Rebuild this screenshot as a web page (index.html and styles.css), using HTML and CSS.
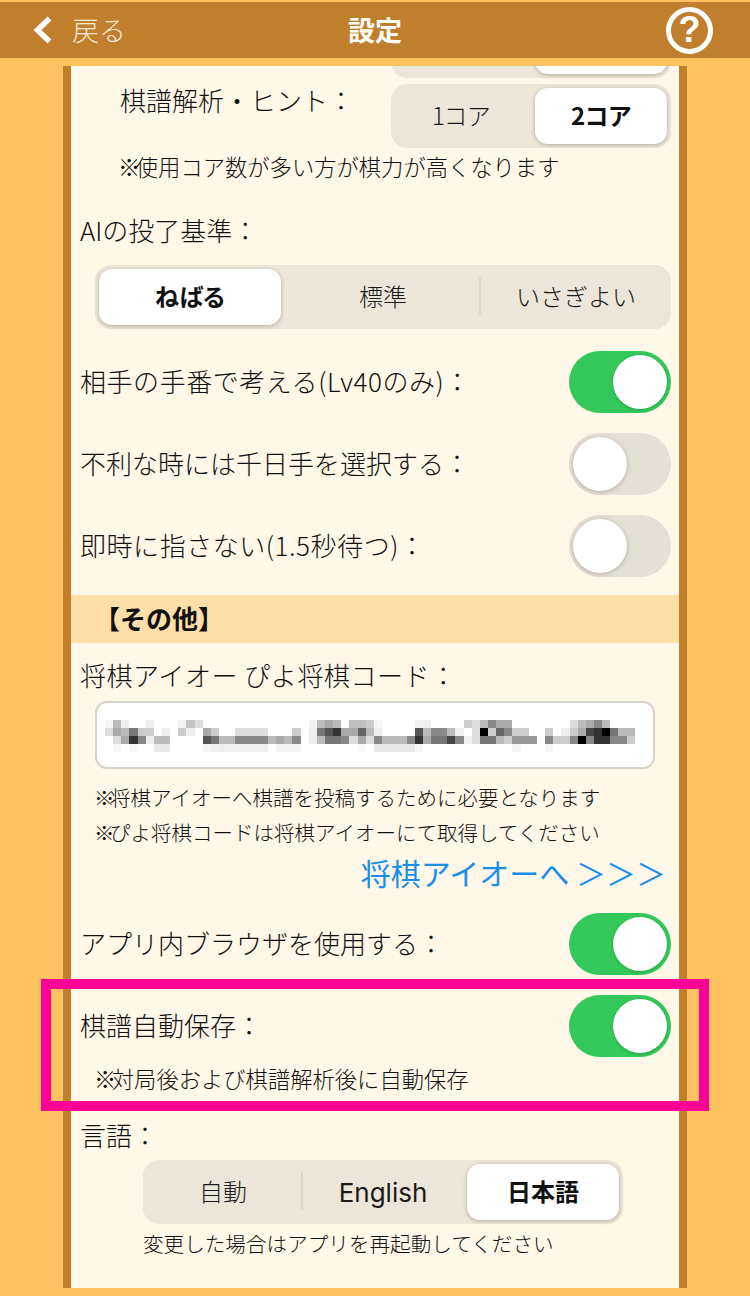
FILE: index.html
```html
<!DOCTYPE html>
<html lang="ja">
<head>
<meta charset="utf-8">
<title>設定</title>
<link rel="stylesheet" href="styles.css">
</head>
<body>
<header class="topbar">
  <div class="back">
    <svg class="chevron" viewBox="0 0 22 30" width="22" height="30"><path d="M18.5 3.5 L6.5 15 L18.5 26.5" fill="none" stroke="#fff" stroke-width="5.5"/></svg>
    <span>戻る</span>
  </div>
  <h1 class="title">設定</h1>
  <div class="help">?</div>
</header>
<main class="sheet">
  <div class="seg seg-core seg-clipped">
    <div class="opt">&nbsp;</div>
    <div class="opt on">&nbsp;</div>
  </div>
  <div class="core-row">
    <div class="label core-label">棋譜解析・ヒント：</div>
    <div class="seg seg-core">
      <div class="opt">1コア</div>
      <div class="opt on">2コア</div>
    </div>
  </div>
  <p class="note note-core"><span class="mark">※</span>使用コア数が多い方が棋力が高くなります</p>
  <div class="label label-ai">AIの投了基準：</div>
  <div class="seg seg-ai">
    <div class="opt on">ねばる</div>
    <div class="opt">標準</div>
    <div class="opt div full">いさぎよい</div>
  </div>
  <div class="row row-first"><div class="label wide">相手の手番で考える(Lv40のみ)：</div><div class="toggle is-on"><i></i></div></div>
  <div class="row"><div class="label">不利な時には千日手を選択する：</div><div class="toggle"><i></i></div></div>
  <div class="row"><div class="label wide">即時に指さない(1.5秒待つ)：</div><div class="toggle"><i></i></div></div>
  <div class="band">【その他】</div>
  <div class="label wide label-code">将棋アイオー ぴよ将棋コード：</div>
  <div class="code-input">
    <svg class="mosaic" viewBox="0 0 67 4" width="546" height="32" preserveAspectRatio="none" shape-rendering="crispEdges">
      <g>
        <rect x="0" y="0" width="1" height="1" fill="#f5f5f5"/><rect x="1" y="0" width="1" height="1" fill="#bbb"/><rect x="2" y="0" width="1" height="1" fill="#f0f0f0"/><rect x="5" y="0" width="1" height="1" fill="#eee"/><rect x="9" y="0" width="1" height="1" fill="#f2f2f2"/><rect x="10" y="0" width="1" height="1" fill="#c4c4c4"/><rect x="11" y="0" width="1" height="1" fill="#ddd"/><rect x="25" y="0" width="1" height="1" fill="#f2f2f2"/><rect x="26" y="0" width="1" height="1" fill="#bbb"/><rect x="27" y="0" width="1" height="1" fill="#aaa"/><rect x="28" y="0" width="1" height="1" fill="#bbb"/><rect x="30" y="0" width="2" height="1" fill="#c0c0c0"/><rect x="32" y="0" width="1" height="1" fill="#ccc"/><rect x="33" y="0" width="1" height="1" fill="#f5f5f5"/><rect x="38" y="0" width="1" height="1" fill="#f0f0f0"/><rect x="39" y="0" width="1" height="1" fill="#eee"/><rect x="44" y="0" width="1" height="1" fill="#ccc"/><rect x="45" y="0" width="1" height="1" fill="#ddd"/><rect x="46" y="0" width="1" height="1" fill="#bbb"/><rect x="47" y="0" width="1" height="1" fill="#888"/><rect x="48" y="0" width="2" height="1" fill="#aaa"/><rect x="57" y="0" width="1" height="1" fill="#ddd"/><rect x="58" y="0" width="1" height="1" fill="#bbb"/><rect x="59" y="0" width="1" height="1" fill="#aaa"/><rect x="60" y="0" width="1" height="1" fill="#888"/><rect x="61" y="0" width="1" height="1" fill="#bbb"/>
      </g>
      <g>
        <rect x="0" y="1" width="1" height="1" fill="#ddd"/><rect x="1" y="1" width="1" height="1" fill="#aaa"/><rect x="2" y="1" width="1" height="1" fill="#bbb"/><rect x="3" y="1" width="1" height="1" fill="#777"/><rect x="4" y="1" width="2" height="1" fill="#ccc"/><rect x="7" y="1" width="1" height="1" fill="#eee"/><rect x="9" y="1" width="1" height="1" fill="#ccc"/><rect x="10" y="1" width="1" height="1" fill="#eee"/><rect x="12" y="1" width="1" height="1" fill="#aaa"/><rect x="13" y="1" width="1" height="1" fill="#ccc"/><rect x="16" y="1" width="4" height="1" fill="#ddd"/><rect x="23" y="1" width="1" height="1" fill="#ccc"/><rect x="25" y="1" width="1" height="1" fill="#eee"/><rect x="26" y="1" width="1" height="1" fill="#777"/><rect x="27" y="1" width="1" height="1" fill="#555"/><rect x="28" y="1" width="1" height="1" fill="#333"/><rect x="29" y="1" width="2" height="1" fill="#aaa"/><rect x="31" y="1" width="1" height="1" fill="#666"/><rect x="32" y="1" width="1" height="1" fill="#bbb"/><rect x="33" y="1" width="1" height="1" fill="#eee"/><rect x="38" y="1" width="1" height="1" fill="#555"/><rect x="39" y="1" width="1" height="1" fill="#bbb"/><rect x="40" y="1" width="2" height="1" fill="#888"/><rect x="42" y="1" width="1" height="1" fill="#bbb"/><rect x="43" y="1" width="1" height="1" fill="#eee"/><rect x="45" y="1" width="1" height="1" fill="#ddd"/><rect x="46" y="1" width="1" height="1" fill="#000"/><rect x="47" y="1" width="1" height="1" fill="#ccc"/><rect x="48" y="1" width="1" height="1" fill="#666"/><rect x="49" y="1" width="1" height="1" fill="#888"/><rect x="50" y="1" width="2" height="1" fill="#ccc"/><rect x="54" y="1" width="1" height="1" fill="#ccc"/><rect x="56" y="1" width="1" height="1" fill="#eee"/><rect x="57" y="1" width="1" height="1" fill="#ccc"/><rect x="58" y="1" width="1" height="1" fill="#aaa"/><rect x="59" y="1" width="1" height="1" fill="#444"/><rect x="60" y="1" width="1" height="1" fill="#333"/><rect x="61" y="1" width="1" height="1" fill="#000"/><rect x="62" y="1" width="1" height="1" fill="#777"/><rect x="63" y="1" width="2" height="1" fill="#bbb"/>
      </g>
      <g>
        <rect x="1" y="2" width="1" height="1" fill="#ddd"/><rect x="2" y="2" width="1" height="1" fill="#aaa"/><rect x="3" y="2" width="1" height="1" fill="#333"/><rect x="4" y="2" width="1" height="1" fill="#888"/><rect x="5" y="2" width="1" height="1" fill="#eee"/><rect x="6" y="2" width="2" height="1" fill="#bbb"/><rect x="12" y="2" width="1" height="1" fill="#555"/><rect x="13" y="2" width="1" height="1" fill="#777"/><rect x="14" y="2" width="2" height="1" fill="#bbb"/><rect x="16" y="2" width="4" height="1" fill="#888"/><rect x="20" y="2" width="1" height="1" fill="#bbb"/><rect x="21" y="2" width="1" height="1" fill="#aaa"/><rect x="22" y="2" width="1" height="1" fill="#bbb"/><rect x="23" y="2" width="1" height="1" fill="#888"/><rect x="25" y="2" width="1" height="1" fill="#eee"/><rect x="26" y="2" width="1" height="1" fill="#bbb"/><rect x="27" y="2" width="2" height="1" fill="#777"/><rect x="29" y="2" width="1" height="1" fill="#888"/><rect x="30" y="2" width="1" height="1" fill="#ddd"/><rect x="31" y="2" width="1" height="1" fill="#aaa"/><rect x="32" y="2" width="1" height="1" fill="#ddd"/><rect x="33" y="2" width="1" height="1" fill="#888"/><rect x="34" y="2" width="3" height="1" fill="#bbb"/><rect x="37" y="2" width="1" height="1" fill="#888"/><rect x="38" y="2" width="1" height="1" fill="#333"/><rect x="39" y="2" width="1" height="1" fill="#aaa"/><rect x="40" y="2" width="2" height="1" fill="#777"/><rect x="42" y="2" width="1" height="1" fill="#444"/><rect x="43" y="2" width="1" height="1" fill="#888"/><rect x="44" y="2" width="1" height="1" fill="#eee"/><rect x="45" y="2" width="1" height="1" fill="#ddd"/><rect x="46" y="2" width="2" height="1" fill="#777"/><rect x="48" y="2" width="1" height="1" fill="#bbb"/><rect x="49" y="2" width="1" height="1" fill="#ccc"/><rect x="50" y="2" width="3" height="1" fill="#999"/><rect x="54" y="2" width="1" height="1" fill="#888"/><rect x="55" y="2" width="2" height="1" fill="#ccc"/><rect x="57" y="2" width="1" height="1" fill="#888"/><rect x="58" y="2" width="1" height="1" fill="#000"/><rect x="59" y="2" width="1" height="1" fill="#888"/><rect x="60" y="2" width="2" height="1" fill="#333"/><rect x="62" y="2" width="2" height="1" fill="#888"/><rect x="64" y="2" width="1" height="1" fill="#ccc"/>
      </g>
      <g>
        <rect x="1" y="3" width="1" height="1" fill="#f8f8f8"/><rect x="3" y="3" width="1" height="1" fill="#f8f8f8"/><rect x="6" y="3" width="2" height="1" fill="#e8e8e8"/><rect x="12" y="3" width="1" height="1" fill="#f5f5f5"/><rect x="13" y="3" width="1" height="1" fill="#f0f0f0"/><rect x="14" y="3" width="6" height="1" fill="#eee"/><rect x="21" y="3" width="3" height="1" fill="#f5f5f5"/><rect x="31" y="3" width="1" height="1" fill="#f8f8f8"/><rect x="33" y="3" width="5" height="1" fill="#e8e8e8"/><rect x="38" y="3" width="1" height="1" fill="#f5f5f5"/><rect x="50" y="3" width="1" height="1" fill="#f5f5f5"/><rect x="54" y="3" width="1" height="1" fill="#f5f5f5"/>
      </g>
    </svg>
  </div>
  <p class="note note-wide note-first"><span class="mark">※</span>将棋アイオーへ棋譜を投稿するために必要となります</p>
  <p class="note note-wide"><span class="mark">※</span>ぴよ将棋コードは将棋アイオーにて取得してください</p>
  <a class="link">将棋アイオーへ ＞＞＞</a>
  <div class="row row-browser"><div class="label">アプリ内ブラウザを使用する：</div><div class="toggle is-on"><i></i></div></div>
  <div class="row"><div class="label">棋譜自動保存：</div><div class="toggle is-on"><i></i></div></div>
  <p class="note note-auto"><span class="mark">※</span>対局後および棋譜解析後に自動保存</p>
  <div class="label label-lang">言語：</div>
  <div class="seg seg-lang">
    <div class="opt">自動</div>
    <div class="opt div en">English</div>
    <div class="opt on">日本語</div>
  </div>
  <p class="note note-lang">変更した場合はアプリを再起動してください</p>
</main>
<div class="highlight"></div>
</body>
</html>
```
FILE: styles.css
```css
* { box-sizing: border-box; }
html, body { margin: 0; padding: 0; }
body {
  position: relative;
  width: 750px;
  height: 1296px;
  overflow: hidden;
  background: #fec260;
  color: #111;
  font-family: "Noto Sans CJK JP", "Noto Sans", sans-serif;
  font-weight: 300;
}
.topbar {
  position: relative;
  display: flex;
  align-items: center;
  justify-content: space-between;
  height: 56px;
  margin-top: 2px;
  padding: 0 37px 0 31px;
  background: #c07f2d;
  color: #fff;
}
.back { display: flex; align-items: center; gap: 19px; font-size: 27px; color: #f7e9d5; padding-bottom: 2px; }
.back svg { margin-bottom: -2px; }
.chevron { display: block; }
.title { position: absolute; left: 0; right: 0; margin: 0; padding-bottom: 2px; text-align: center; font-size: 27px; font-weight: 700; }
.help {
  width: 47px; height: 47px;
  border: 5px solid #fff; border-radius: 50%;
  display: flex; align-items: center; justify-content: center;
  font-family: "Liberation Sans", sans-serif;
  font-size: 36px; font-weight: 700; line-height: 1;
  position: relative;
}
.sheet {
  width: 624px;
  height: 1222px;
  margin: 8px 0 0 63px;
  padding: 0 8px 0 9px;
  border-left: 8px solid #c07f2d;
  border-right: 8px solid #c07f2d;
  background: #fff7e8;
  overflow: hidden;
}
.label { font-size: 26px; line-height: 36px; white-space: nowrap; }
.wide { letter-spacing: .55px; }
.note { margin: 0; font-size: 22.3px; line-height: 30px; white-space: nowrap; }
.mark { letter-spacing: -4.5px; }
.seg {
  display: grid;
  grid-auto-flow: column;
  grid-auto-columns: 1fr;
  height: 64px;
  padding: 4px;
  border-radius: 16px;
  background: #ece6da;
  font-size: 24px;
  flex: none;
}
.opt {
  position: relative;
  display: flex; align-items: center; justify-content: center;
  padding-bottom: 4px;
  border-radius: 13px;
  color: #1a1a1a;
  white-space: nowrap;
  font-feature-settings: "palt";
}
.opt.full { font-feature-settings: normal; }
.opt.on { background: #fff; color: #111; font-weight: 700; box-shadow: 0 1px 4px rgba(70,60,40,.35); }
.opt.div::before {
  content: ""; position: absolute; left: -6px; top: 8px; bottom: 10px; width: 2px; background: #ddd7ca;
}
.en { font-family: Inter, "Liberation Sans", sans-serif; font-size: 26px; font-weight: 400; padding-bottom: 0; }
.seg-core { width: 280px; gap: 8px; }
.seg-clipped { margin: -52px 0 0 311px; }
.core-row { display: flex; justify-content: space-between; align-items: flex-start; margin-top: 6px; padding-left: 40px; }
.core-label { margin-top: -2px; }
.note-core { margin-top: 3px; padding-left: 38px; }
.label-ai { margin-top: 31px; }
.seg-ai { width: 576px; margin: 17px 0 0 15px; gap: 11px; }
.row { display: flex; align-items: center; justify-content: space-between; height: 62px; margin-top: 20px; }
.row .label { padding-bottom: 2px; }
.row-first { margin-top: 22px; }
.row-browser { margin-top: 21px; }
.toggle {
  width: 102px; height: 62px; flex: none;
  padding: 4px;
  border-radius: 31px;
  background: #e5e0d6;
  display: flex; justify-content: flex-start;
}
.toggle i { display: block; width: 54px; height: 54px; border-radius: 50%; background: #fff; box-shadow: 0 1px 4px rgba(60,50,30,.3); }
.toggle.is-on { background: #34c759; justify-content: flex-end; }
.toggle.is-on i { box-shadow: 0 1px 3px rgba(0,60,20,.25); }
.band {
  height: 48px; margin: 18px -8px 0 -9px;
  padding-left: 23px;
  background: #ffdfa9;
  font-size: 26px; font-weight: 700; line-height: 46px;
}
.label-code { margin-top: 14px; }
.code-input {
  width: 560px; height: 68px; margin: 8px 0 0 15px;
  padding: 17px 0 0 8px;
  border: 2px solid #d8d2ca; border-radius: 12px;
  background: #fff;
}
.mosaic { display: block; }
.note-wide { font-size: 20.5px; line-height: 35px; padding-left: 14px; }
.note-first { margin-top: 11px; }
.link {
  display: block; margin-top: 2px; padding-right: 5px;
  text-align: right; color: #1a8fe8; font-weight: 400;
  font-size: 30px; line-height: 40px; white-space: nowrap;
}
.note-auto { margin-top: 6px; padding-left: 14px; font-size: 22.3px; }
.label-lang { margin-top: 24px; }
.seg-lang { width: 480px; margin: 7px 0 0 63px; gap: 8px; }
.note-lang { margin-top: 4px; padding-left: 63px; font-size: 20.6px; }
.highlight {
  position: absolute; left: 41px; top: 979px; width: 668px; height: 132px;
  border: 10px solid #ff0097;
}
```
